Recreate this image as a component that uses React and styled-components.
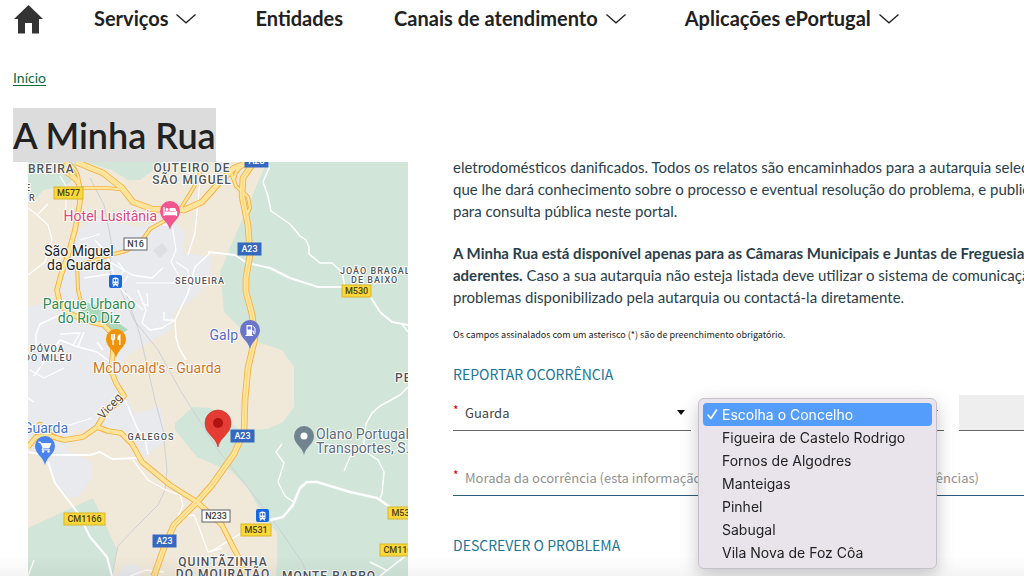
import React from 'react';
import styled, { createGlobalStyle } from 'styled-components';

const GlobalStyle = createGlobalStyle`
  * {
    box-sizing: border-box;
  }

  body {
    margin: 0;
    background: #fff;
    color: #212121;
    font-family: Lato, sans-serif;
    overflow: hidden;
  }
`;

const Page = styled.div`
  min-height: 100vh;
  overflow: hidden;
`;

const Nav = styled.nav`
  display: flex;
  align-items: center;
  gap: 51px;
  height: 38px;
  padding: 0 14px;
`;

const HomeLink = styled.a`
  display: flex;
  color: #333;
`;

const NavButton = styled.button`
  display: flex;
  align-items: center;
  gap: 8px;
  padding: 0 0 2px;
  padding-right: ${props => (props.$menu ? '8px' : '0')};
  border: 0;
  background: none;
  color: #212121;
  font: 700 20px/24px Lato, sans-serif;
  white-space: nowrap;
`;

const Breadcrumb = styled.nav`
  padding: 30px 13px 0;
  font-size: 14px;
  line-height: 20px;

  a {
    color: #0b6b3a;
    text-underline-offset: 2px;
  }
`;

const Title = styled.h1`
  width: fit-content;
  margin: 20px 0 0 13px;
  background: #dcdcdc;
  font-size: 36px;
  font-weight: 600;
  line-height: 54px;
`;

const Main = styled.main`
  display: grid;
  grid-template-columns: minmax(380px, 1fr) 744px;
  gap: 45px;
  width: 1197px;
  min-width: 100%;
  padding-left: 28px;
`;

const MapView = styled.svg`
  display: block;
  width: 100%;
  height: 414px;
  background: #f0e8d9;
  font-family: Roboto, sans-serif;
`;

const Content = styled.section`
  margin-top: -6px;
  color: #2b3e4a;
`;

const Paragraph = styled.p`
  margin: 0 0 20px;
  font-size: 15px;
  line-height: 22px;
  white-space: nowrap;
`;

const Note = styled.p`
  margin: 0;
  color: #212121;
  font: 9px/14px "Noto Sans CJK JP", sans-serif;
`;

const FormTitle = styled.h2`
  margin: 0;
  color: #1c7596;
  font: 400 14px/24px "Noto Sans CJK JP", sans-serif;
`;

const Form = styled.form`
  padding-top: 20px;
`;

const Row = styled.div`
  display: grid;
  grid-template-columns: repeat(${props => props.$columns}, 1fr);
  gap: 15px;
  margin-top: ${props => props.$top}px;
`;

const Field = styled.div`
  position: relative;
  display: flex;
  align-items: center;
  height: 36px;
  border-bottom: 1px solid ${props => (props.$active ? '#2d5b7c' : '#666')};
  background: ${props => (props.$disabled ? '#eee' : 'none')};
`;

const Required = styled.label`
  width: 12px;
  height: 20px;
  color: #c00;
  font: 12px/14px "Noto Sans CJK JP", sans-serif;
`;

const Select = styled.select`
  flex: 1;
  min-width: 0;
  height: 100%;
  padding: 0;
  border: 0;
  appearance: none;
  background: none;
  color: #444;
  font: 13px "Noto Sans CJK JP", sans-serif;
`;

const Caret = styled.span`
  margin-right: 6px;
  border: 4px solid transparent;
  border-top: 5px solid #111;
  border-bottom: 0;
`;

const Input = styled.input`
  flex: 1;
  height: 100%;
  padding: 0;
  border: 0;
  outline: 0;
  background: none;
  font: 13px "Noto Sans CJK JP", sans-serif;

  &::placeholder {
    color: #919191;
  }
`;

const Menu = styled.ul`
  position: absolute;
  top: 3px;
  left: -8px;
  z-index: 2;
  width: 239px;
  margin: 0;
  padding: 4px;
  border: 1px solid #c6c1c8;
  border-radius: 6px;
  background: #e9e4ec;
  box-shadow: 0 6px 18px rgba(0, 0, 0, 0.22);
  list-style: none;
`;

const Option = styled.button`
  display: flex;
  align-items: center;
  width: 100%;
  height: 23px;
  padding: 0;
  border: 0;
  border-radius: 4px;
  background: ${props => (props.$selected ? '#559dfd' : 'none')};
  color: ${props => (props.$selected ? '#fff' : '#222')};
  font: 14px Inter, sans-serif;
  text-align: left;
`;

const Tick = styled.span`
  display: flex;
  justify-content: center;
  width: 19px;
`;

/* Soft shade along the lower edge of the window */
const BottomShade = styled.div`
  position: fixed;
  inset: auto 0 0;
  height: 20px;
  background: linear-gradient(transparent, rgba(0, 0, 0, 0.04));
  pointer-events: none;
`;

const navItems = [
  { label: 'Serviços', menu: true },
  { label: 'Entidades', menu: false },
  { label: 'Canais de atendimento', menu: true },
  { label: 'Aplicações ePortugal', menu: true },
];

const concelhos = [
  'Escolha o Concelho',
  'Figueira de Castelo Rodrigo',
  'Fornos de Algodres',
  'Manteigas',
  'Pinhel',
  'Sabugal',
  'Vila Nova de Foz Côa',
];

const urban = [
  'M74 236L78 230L95 217L138 227L161 220L175 223L185 232L183 253L211 257L210 283L188 303L175 310L171 330L141 347L125 357L121 387L135 413L161 407L166 440L145 457L132 436L104 430H28V307L56 300V280L66 262Z',
  'M28 424H78L66 450L92 462V478L78 497H68L54 482L46 462L28 446Z',
  'M118 576L126 564L140 566V576Z',
];

const greens = [
  'M267 162H408V576H276L277 563L277 533L260 510L247 487L230 470L220 467L197 457L175 430V423L193 407L210 408L240 430L267 429L283 422L294 407V367L282 350L260 343L237 325L224 312L222 290L220 272L256 187Z',
  'M28 528L93 498L102 517L117 550L112 576H28Z',
  'M28 162H78L74 178L66 186L43 190L36 199H28Z',
  'M84 162H164L148 174L140 180L128 180L112 170Z',
];

const whiteRoads = [
  { d: 'M208 252L235 255L247 263L270 268L290 278L318 287H345', w: 2 },
  { d: 'M370 296L380 312L392 322L408 325', w: 2 },
  { d: 'M402 324L408 332', w: 1.5 },
  { d: 'M268 162L269 168L263 182L268 196L271 211L290 224L300 236L306 240L309 247V254L320 263H332L342 272L345 287', w: 1.5 },
  { d: 'M408 387L400 395L380 406L372 413L366 424L363 450L378 460L384 472L382 494L379 500', w: 1.5 },
  { d: 'M353 450L344 471', w: 1.2 },
  { d: 'M270 520L283 517L293 505L300 488L307 482L317 482L350 492L377 498L390 507', w: 2.5 },
  { d: 'M282 444L276 452L284 463L278 482L285 496L295 503', w: 1.3 },
  { d: 'M28 452L45 455H90L100 452L112 459L138 458', w: 2 },
  { d: 'M48 462L55 483L68 500L78 513L90 537L107 557L112 576', w: 2 },
  { d: 'M133 460L148 480L166 490L180 495L183 505L178 517L194 515L200 530L208 552L222 548', w: 1.3 },
  { d: 'M125 400L138 430L145 438L148 455', w: 1.3 },
  { d: 'M380 576L408 554M370 562L386 570', w: 1.6 },
  { d: 'M211 252L195 267L188 293L175 320L176 337L179 348L186 360', w: 1.5 },
  { d: 'M200 180L195 233L188 255M176 320H164V312', w: 1.3 },
  { d: 'M163 225L172 225L176 250L171 262L180 278L184 283H136M176 262L188 270V280', w: 1.2 },
  { d: 'M28 275L45 262L52 240L48 225L36 214L28 208M38 214L48 204M60 176L66 186V216', w: 1.2 },
  { d: 'M92 264L110 262L132 275L152 278L163 268M118 262L124 270L112 288M128 276L120 288L132 300L143 310M95 240L106 252L114 274M80 240L100 234M84 278L110 274', w: 1.3 },
  { d: 'M62 314L40 324L36 334V348M34 376L60 340L75 346L97 352L110 362M60 334L80 333L73 345M78 347L84 332M97 342L103 350', w: 1.4 },
  { d: 'M138 290L146 310L142 323L150 330L162 328L175 320M142 303L148 306L147 293', w: 1.3 },
  { d: 'M28 398L34 402M92 418L60 428M30 370L44 378L64 368', w: 1.2 },
  { d: 'M28 576L34 560M130 576L146 570L164 572M210 552L240 534L262 526', w: 1.3 },
];

const rails = [
  'M90 178L104 205L111 240L110 280M125 290L140 335L155 400L163 430L167 470L165 490L158 505L138 525L118 546L112 576',
  'M118 284L134 320L158 350L180 390L218 450L250 490L280 530L302 562L308 576',
];

const majorRoads = [
  { d: 'M66 162L72 174L79 184L80 202L75 230L68 255L61 275L57 290L60 304L67 312L84 320L104 325L112 334L113 352L111 370L116 383L124 396L118 402L106 412L97 427L83 437L64 440L46 435L36 437L28 447', w: 4 },
  { d: 'M68 162Q62 172 70 176L79 184Q80 172 70 164', w: 2 },
  { d: 'M80 188H108L126 190', w: 2 },
  { d: 'M77 263L78 290L82 306', w: 2.5 },
  { d: 'M166 220L150 229L141 242L126 251L110 255L90 262L76 265', w: 2.5 },
  { d: 'M202 168L194 187L181 208', w: 2.5 },
  { d: 'M76 162L103 173L122 188L133 202L152 209L184 210L202 202L218 184L234 168L250 162', w: 5 },
  { d: 'M230 170L236 186L248 197L250 208L246 216M248 164Q236 166 234 180', w: 2.5 },
  { d: 'M97 427L108 431L121 433L132 444L142 462L170 485L197 502L208 512L222 525L232 545L240 560L246 576', w: 4 },
  { d: 'M254 162L243 178L242 196L248 225L250 255L246 278L246 292L252 314L255 338L248 368L245 400L244 432L234 454L212 485L196 503L174 525L165 545L154 576', w: 5 },
  { d: 'M42 424Q36 422 40 430M34 434L44 426L56 434', w: 2 },
];

const shields = [
  { x: 54, y: 187, w: 29, text: 'M577', type: 'yellow' },
  { x: 124, y: 238, w: 23, text: 'N16', type: 'white' },
  { x: 245, y: 155, w: 23, text: 'A23', type: 'blue' },
  { x: 238, y: 243, w: 23, text: 'A23', type: 'blue' },
  { x: 342, y: 285, w: 29, text: 'M530', type: 'yellow' },
  { x: 231, y: 430, w: 23, text: 'A23', type: 'blue' },
  { x: 64, y: 513, w: 41, text: 'CM1166', type: 'yellow' },
  { x: 202, y: 510, w: 28, text: 'N233', type: 'white' },
  { x: 241, y: 524, w: 30, text: 'M531', type: 'yellow' },
  { x: 153, y: 535, w: 23, text: 'A23', type: 'blue' },
  { x: 388, y: 507, w: 30, text: 'M531', type: 'yellow' },
  { x: 380, y: 544, w: 41, text: 'CM1166', type: 'yellow' },
];

const shieldColors = {
  yellow: { fill: '#fbd93b', stroke: '#d9b52a', color: '#4a4014' },
  white: { fill: '#fff', stroke: '#5f6368', color: '#3c4043' },
  blue: { fill: '#3568c0', stroke: '#3568c0', color: '#fff' },
};

const places = [
  { x: 28, y: 173, text: 'BREIRA', size: 12, spacing: 1 },
  { x: 25, y: 191, text: 'E', size: 9 },
  { x: 29, y: 201, text: 'R', size: 9 },
  { x: 192, y: 172, text: 'OUTEIRO DE', size: 12, spacing: 1, anchor: 'middle' },
  { x: 192, y: 184, text: 'SÃO MIGUEL', size: 12, spacing: 1, anchor: 'middle' },
  { x: 157, y: 221, text: 'Hotel Lusitânia', size: 14, color: '#dc457c', anchor: 'end' },
  { x: 79, y: 256, text: 'São Miguel', size: 14, color: '#202124', anchor: 'middle' },
  { x: 79, y: 270, text: 'da Guarda', size: 14, color: '#202124', anchor: 'middle' },
  { x: 200, y: 284, text: 'SEQUEIRA', size: 9, spacing: 1, anchor: 'middle' },
  { x: 340, y: 274, text: 'JOÃO BRAGAL', size: 9, spacing: 1 },
  { x: 351, y: 283, text: 'DE BAIXO', size: 9, spacing: 1 },
  { x: 89, y: 309, text: 'Parque Urbano', size: 14, color: '#308a4f', anchor: 'middle' },
  { x: 89, y: 323, text: 'do Rio Diz', size: 14, color: '#308a4f', anchor: 'middle' },
  { x: 238, y: 340, text: 'Galp', size: 14, color: '#5968bc', anchor: 'end' },
  { x: 30, y: 352, text: 'PÓVOA', size: 9, spacing: 1 },
  { x: 24, y: 361, text: 'DO MILEU', size: 9, spacing: 1 },
  { x: 93, y: 373, text: "McDonald's - Guarda", size: 14, color: '#d07420' },
  { x: 395, y: 382, text: 'PE', size: 12, spacing: 1 },
  { x: 68, y: 433, text: 'Guarda', size: 14, color: '#3f73cf', anchor: 'end' },
  { x: 151, y: 440, text: 'GALEGOS', size: 9, spacing: 1, anchor: 'middle' },
  { x: 316, y: 439, text: 'Olano Portugal', size: 14, color: '#5a6c77' },
  { x: 316, y: 453, text: 'Transportes, S.A', size: 14, color: '#5a6c77' },
  { x: 223, y: 566, text: 'QUINTÃZINHA', size: 12, spacing: 1, anchor: 'middle' },
  { x: 223, y: 578, text: 'DO MOURATÃO', size: 12, spacing: 1, anchor: 'middle' },
  { x: 329, y: 580, text: 'MONTE BARRO', size: 12, spacing: 1, anchor: 'middle' },
];

const HomeIcon = () => (
  <svg width="29" height="30" viewBox="0 0 29 30" aria-hidden="true">
    <path fill="currentColor" d="M14.500 1L0 15H4V29.500H11V19H18V29.500H25V15H29Z" />
  </svg>
);

const Chevron = () => (
  <svg width="20" height="12" viewBox="0 0 20 12" aria-hidden="true">
    <path d="M0.500 2.500L10 10.800L19.500 2.500" fill="none" stroke="#212121" strokeWidth="1.300" />
  </svg>
);

const Pin = ({ x, y, fill, children }) => (
  <g transform={`translate(${x} ${y})`}>
    <path d="M0 18C-1.500 10 -10 7 -10 -1A10 10 0 0 1 10 -1C10 7 1.500 10 0 18Z" fill={fill} />
    {children}
  </g>
);

const Station = ({ x, y }) => (
  <g transform={`translate(${x} ${y})`}>
    <rect width="13" height="13" rx="2" fill="#1a66dc" />
    <path d="M3.500 3.500Q6.500 1.500 9.500 3.500V9Q9.500 10 8.500 10L9.500 11.500H8L7.200 10.200H5.800L5 11.500H3.500L4.500 10Q3.500 10 3.500 9Z" fill="#fff" />
    <path d="M4.500 4.200H6.100V6.500H4.500ZM6.900 4.200H8.500V6.500H6.900ZM4.500 8H5.500V9H4.500ZM7.500 8H8.500V9H7.500Z" fill="#1a66dc" />
  </g>
);

const Shield = ({ x, y, w, text, type }) => {
  const colors = shieldColors[type];
  return (
    <g>
      <rect x={x} y={y} width={w} height="12" fill={colors.fill} stroke={colors.stroke} />
      <text x={x + w / 2} y={y + 9} fill={colors.color} fontSize="9" fontWeight="500" textAnchor="middle">{text}</text>
    </g>
  );
};

const StreetMap = () => (
  <MapView viewBox="28 162 380 414" preserveAspectRatio="xMinYMin slice" role="img" aria-label="Mapa da Guarda">
    {urban.map(d => <path key={d} d={d} fill="#e8eaee" />)}
    {greens.map(d => <path key={d} d={d} fill="#d1e6d9" />)}
    <path d="M78 300L98 306L112 318L128 330L120 334L104 326L84 318Z" fill="#acd9b9" />
    <path d="M153 250L162 243L168 250L160 258Z" fill="#dddfe3" />
    {rails.map(d => <path key={d} d={d} fill="none" stroke="#ced1d4" />)}
    {whiteRoads.map(road => (
      <path key={road.d} d={road.d} fill="none" stroke="#fff" strokeWidth={road.w} strokeLinejoin="round" />
    ))}
    {majorRoads.map(road => (
      <path key={road.d} d={road.d} fill="none" stroke="#f5b041" strokeWidth={road.w + 1.600} strokeLinejoin="round" />
    ))}
    {majorRoads.map(road => (
      <path key={road.d} d={road.d} fill="none" stroke="#fee59b" strokeWidth={road.w - 0.200} strokeLinejoin="round" />
    ))}
    <path d="M254 162L243 178L242 196L248 225L250 255L246 278L246 292L252 314L255 338L248 368L245 400L244 432L234 454L212 485L196 503L174 525L165 545L154 576" fill="none" stroke="#f8cb65" strokeWidth="0.600" />
    {shields.map(shield => <Shield key={`${shield.x}-${shield.y}`} {...shield} />)}
    <Station x={109} y={275} />
    <Station x={256} y={509} />
    <text x="103" y="420" transform="rotate(-48 103 420)" fontSize="12" fill="#5b4630" stroke="#fff" strokeWidth="2" paintOrder="stroke">Viceg</text>
    {places.map(place => (
      <text
        key={`${place.x}-${place.y}`}
        x={place.x}
        y={place.y}
        fill={place.color || '#505459'}
        fontSize={place.size}
        fontWeight={place.color ? 400 : 500}
        letterSpacing={place.spacing}
        textAnchor={place.anchor}
        stroke="#fff"
        strokeWidth="2"
        strokeLinejoin="round"
        paintOrder="stroke"
      >
        {place.text}
      </text>
    ))}
    <Pin x={170} y={212} fill="#f0568f">
      <path d="M-6 -5V4M-6 2.500H6.500V4M6.500 2.500V-1" stroke="#fff" strokeWidth="1.300" fill="none" />
      <path d="M-5 -0.500H6V2H-5ZM-0.500 -4H4.500Q6 -4 6 -1H-0.500Z" fill="#fff" />
      <circle cx="-3" cy="-2.500" r="1.500" fill="#fff" />
    </Pin>
    <Pin x={116} y={340} fill="#f09309">
      <path d="M-4.500 -6V-2Q-4.500 0 -3 0V5M-3 -6V0M-1.500 -6V-2Q-1.500 0 -3 0" stroke="#fff" strokeWidth="1.200" fill="none" />
      <path d="M4.500 -6Q1 -5 1.500 0H3V5H4.500Z" fill="#fff" />
    </Pin>
    <Pin x={250} y={331} fill="#6b76c8">
      <path d="M-3.500 -6H2V4H3V5H-4.500V4H-3.500Z" fill="#fff" />
      <path d="M-2.300 -4.500H0.800V-1.500H-2.300Z" fill="#6b76c8" />
      <path d="M2.500 -5L5 -3V2.500Q4 4 3.500 2V0H2" stroke="#fff" fill="none" />
    </Pin>
    <Pin x={45} y={447} fill="#4b83ec">
      <path d="M-6.500 -5H-4.500L-2 1H4L6 -3.500H-3.500Z" fill="#fff" stroke="#fff" strokeWidth="0.800" />
      <path d="M-2 1L-3 2.800H5" stroke="#fff" fill="none" />
      <circle cx="-2" cy="4.500" r="1.200" fill="#fff" />
      <circle cx="3.500" cy="4.500" r="1.200" fill="#fff" />
    </Pin>
    <Pin x={304} y={437} fill="#71838f">
      <circle cy="-1" r="3.500" fill="#fff" />
    </Pin>
    <path d="M218 447C216 437 205 434 205 423A13 13 0 0 1 231 423C231 434 220 437 218 447Z" fill="#e53c33" stroke="#c12f29" strokeWidth="0.600" />
    <circle cx="218" cy="423" r="5" fill="#b11313" />
  </MapView>
);

const App = () => {
  return (
    <Page>
      <GlobalStyle />
      <Nav>
        <HomeLink href="#" aria-label="Início">
          <HomeIcon />
        </HomeLink>
        {navItems.map(item => (
          <NavButton key={item.label} type="button" $menu={item.menu}>
            {item.label}
            {item.menu && <Chevron />}
          </NavButton>
        ))}
      </Nav>
      <Breadcrumb>
        <a href="#">Início</a>
      </Breadcrumb>
      <Title>A Minha Rua</Title>
      <Main>
        <StreetMap />
        <Content>
          <Paragraph>
            eletrodomésticos danificados. Todos os relatos são encaminhados para a autarquia selecionada,
            <br />
            que lhe dará conhecimento sobre o processo e eventual resolução do problema, e publicados
            <br />
            para consulta pública neste portal.
          </Paragraph>
          <Paragraph>
            <strong>A Minha Rua está disponível apenas para as Câmaras Municipais e Juntas de Freguesia</strong>
            <br />
            <strong>aderentes.</strong> Caso a sua autarquia não esteja listada deve utilizar o sistema de comunicação de
            <br />
            problemas disponibilizado pela autarquia ou contactá-la diretamente.
          </Paragraph>
          <Note>Os campos assinalados com um asterisco (*) são de preenchimento obrigatório.</Note>
          <Form>
            <FormTitle>REPORTAR OCORRÊNCIA</FormTitle>
            <Row $columns={3} $top={9}>
              <Field>
                <Required htmlFor="distrito" aria-label="Distrito">*</Required>
                <Select id="distrito" defaultValue="Guarda">
                  <option>Guarda</option>
                </Select>
                <Caret />
              </Field>
              <Field>
                <Required htmlFor="concelho" aria-label="Concelho">*</Required>
                <Select id="concelho">
                  <option>Escolha o Concelho</option>
                </Select>
                <Caret />
                <Menu>
                  {concelhos.map((concelho, index) => (
                    <li key={concelho}>
                      <Option type="button" $selected={index === 0}>
                        <Tick>
                          {index === 0 && (
                            <svg width="11" height="11" viewBox="0 0 11 11" aria-hidden="true">
                              <path d="M1 6L4 9.500L9.500 1" fill="none" stroke="#fff" strokeWidth="1.600" strokeLinecap="round" strokeLinejoin="round" />
                            </svg>
                          )}
                        </Tick>
                        {concelho}
                      </Option>
                    </li>
                  ))}
                </Menu>
              </Field>
              <Field $disabled>
                <Select aria-label="Freguesia" disabled />
              </Field>
            </Row>
            <Row $columns={1} $top={29}>
              <Field $active>
                <Required htmlFor="morada" aria-label="Morada">*</Required>
                <Input id="morada" placeholder="Morada da ocorrência (esta informação vai permitir ver a localização das ocorrências)" />
              </Field>
            </Row>
            <Row $columns={1} $top={37}>
              <FormTitle>DESCREVER O PROBLEMA</FormTitle>
            </Row>
          </Form>
        </Content>
      </Main>
      <BottomShade />
    </Page>
  );
};

export default App;
